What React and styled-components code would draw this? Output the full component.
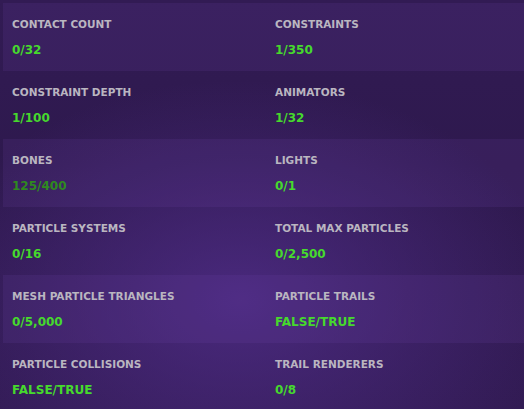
import React from 'react'
import styled, { createGlobalStyle } from 'styled-components';

const GlobalStyle = createGlobalStyle`
  html, body {
    margin: 0;
    padding: 0;
  }
  body {
    font-family: "DejaVu Sans", Verdana, sans-serif;
    background: #2f1a4f;
  }
`

const stats = [
  [
    { label: 'Contact Count', value: '0/32' },
    { label: 'Constraints', value: '1/350' },
  ],
  [
    { label: 'Constraint Depth', value: '1/100' },
    { label: 'Animators', value: '1/32' },
  ],
  [
    { label: 'Bones', value: '125/400', dim: true },
    { label: 'Lights', value: '0/1' },
  ],
  [
    { label: 'Particle Systems', value: '0/16' },
    { label: 'Total Max Particles', value: '0/2,500' },
  ],
  [
    { label: 'Mesh Particle Triangles', value: '0/5,000' },
    { label: 'Particle Trails', value: 'false/true' },
  ],
  [
    { label: 'Particle Collisions', value: 'false/true' },
    { label: 'Trail Renderers', value: '0/8' },
  ],
];

const App = () => {
  return (
    <Panel>
      <GlobalStyle />
      {stats.map((row, i) => (
        <Row key={i} $odd={i % 2 === 0}>
          {row.map((stat) => (
            <Cell key={stat.label}>
              <Label>{stat.label}</Label>
              <Value $dim={stat.dim}>{stat.value}</Value>
            </Cell>
          ))}
        </Row>
      ))}
    </Panel>
  );
};

const Panel = styled.div`
  width: 524px;
  height: 409px;
  box-sizing: border-box;
  padding: 3px 0 0 3px;
  overflow: hidden;
  background:
    radial-gradient(ellipse 320px 220px at 240px 300px, rgba(82, 46, 140, 0.75), rgba(82, 46, 140, 0) 100%),
    linear-gradient(180deg, #321b54 0%, #2e194e 40%, #321b54 100%);
`

const Row = styled.div`
  display: grid;
  grid-template-columns: 263px 1fr;
  height: 68px;
  background: ${(p) => (p.$odd ? 'rgba(120, 80, 185, 0.13)' : 'transparent')};
`

const Cell = styled.div`
  display: flex;
  flex-direction: column;
  gap: 12px;
  padding: 15px 0 0 9px;
`

const Label = styled.div`
  font-size: 10.5px;
  font-weight: bold;
  line-height: 13px;
  text-transform: uppercase;
  color: #bab6c0;
`

const Value = styled.div`
  font-size: 12px;
  font-weight: bold;
  line-height: 15px;
  text-transform: uppercase;
  color: ${(p) => (p.$dim ? '#2f8a1f' : '#46d92d')};
`

export default App
